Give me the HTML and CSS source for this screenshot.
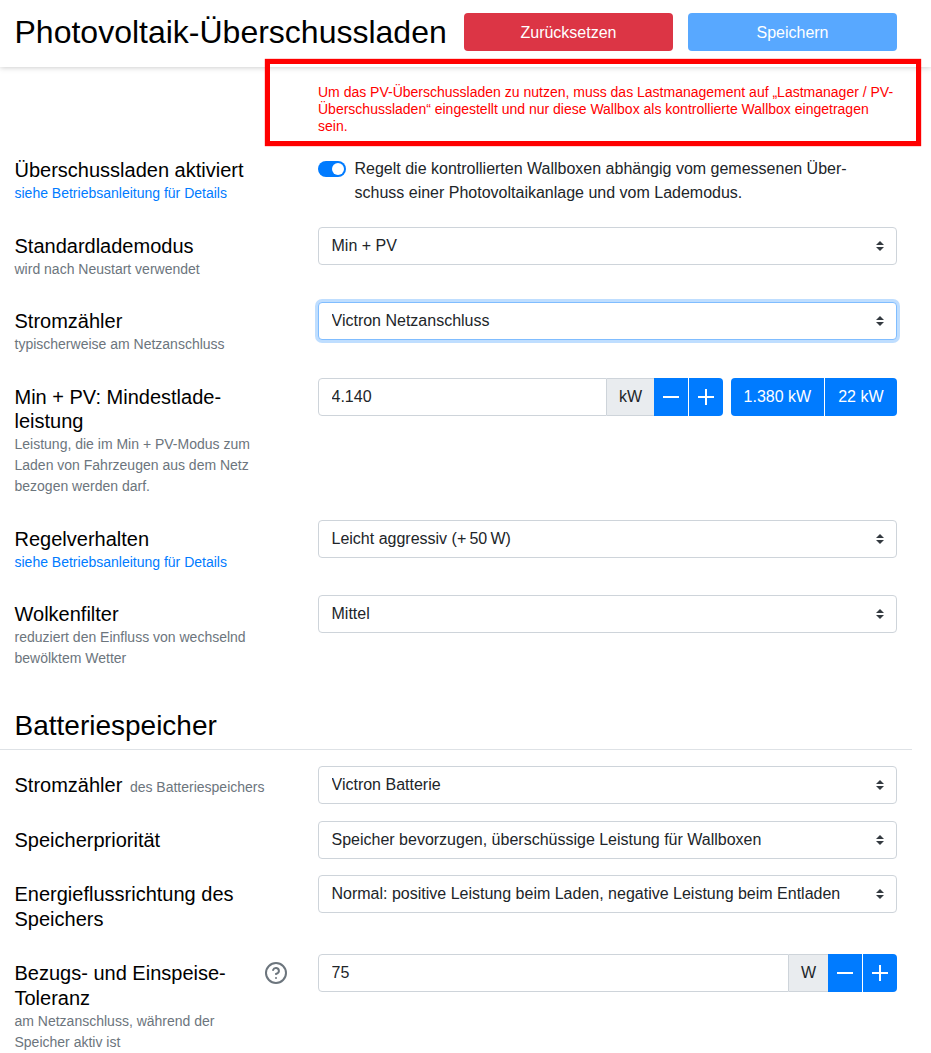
FILE: index.html
```html
<!DOCTYPE html>
<html lang="de">
<head>
    <meta charset="utf-8">
    <title>Photovoltaik-Überschussladen</title>
    <link rel="stylesheet" href="styles.css">
</head>
<body>
<div class="page">
    <header class="page-header">
        <h1 class="page-title">Photovoltaik-Überschussladen</h1>
        <div class="header-actions">
            <button class="btn btn-danger">Zurücksetzen</button>
            <button class="btn btn-primary btn-disabled">Speichern</button>
        </div>
    </header>

    <div class="notice-wrap">
        <p class="notice-text">Um das PV-Überschussladen zu nutzen, muss das Lastmanagement auf „Lastmanager / PV-Überschussladen“ eingestellt und nur diese Wallbox als kontrollierte Wallbox eingetragen sein.</p>
        <div class="notice-frame"></div>
    </div>

    <div class="form-row">
        <div class="form-label">
            <div class="label-title">Überschussladen aktiviert</div>
            <a class="label-link" href="#">siehe Betriebsanleitung für Details</a>
        </div>
        <div class="switch-field">
            <span class="switch"><span class="switch-knob"></span></span>
            <span class="switch-text">Regelt die kontrollierten Wallboxen abhängig vom gemessenen Über&shy;schuss einer Photovoltaikanlage und vom Lademodus.</span>
        </div>
    </div>

    <div class="form-row">
        <div class="form-label">
            <div class="label-title">Standardlademodus</div>
            <div class="label-sub">wird nach Neustart verwendet</div>
        </div>
        <select class="select"><option>Min + PV</option></select>
    </div>

    <div class="form-row">
        <div class="form-label">
            <div class="label-title">Stromzähler</div>
            <div class="label-sub">typischerweise am Netzanschluss</div>
        </div>
        <select class="select select-focus"><option>Victron Netzanschluss</option></select>
    </div>

    <div class="form-row">
        <div class="form-label">
            <div class="label-title">Min + PV: Mindestlade&shy;leistung</div>
            <div class="label-sub">Leistung, die im Min + PV-Modus zum Laden von Fahrzeugen aus dem Netz bezogen werden darf.</div>
        </div>
        <div class="input-line">
            <div class="input-group">
                <input class="input-value" value="4.140">
                <div class="input-unit">kW</div>
                <button class="step" aria-label="weniger"><svg width="16" height="16" viewBox="0 0 16 16"><path d="M0 8h16" stroke="#fff" stroke-width="2"/></svg></button>
                <button class="step step-last" aria-label="mehr"><svg width="16" height="16" viewBox="0 0 16 16"><path d="M0 8h16M8 0v16" stroke="#fff" stroke-width="2"/></svg></button>
            </div>
            <div class="preset-group">
                <button class="preset">1.380 kW</button>
                <button class="preset">22 kW</button>
            </div>
        </div>
    </div>

    <div class="form-row">
        <div class="form-label">
            <div class="label-title">Regelverhalten</div>
            <a class="label-link" href="#">siehe Betriebsanleitung für Details</a>
        </div>
        <select class="select"><option>Leicht aggressiv (+&#8239;50&#8239;W)</option></select>
    </div>

    <div class="form-row">
        <div class="form-label">
            <div class="label-title">Wolkenfilter</div>
            <div class="label-sub">reduziert den Einfluss von wechselnd bewölktem Wetter</div>
        </div>
        <select class="select"><option>Mittel</option></select>
    </div>

    <h2 class="section-title">Batteriespeicher</h2>

    <div class="form-row">
        <div class="form-label">
            <div class="label-title">Stromzähler <span class="label-inline">des Batteriespeichers</span></div>
        </div>
        <select class="select"><option>Victron Batterie</option></select>
    </div>

    <div class="form-row">
        <div class="form-label">
            <div class="label-title">Speicherpriorität</div>
        </div>
        <select class="select"><option>Speicher bevorzugen, überschüssige Leistung für Wallboxen</option></select>
    </div>

    <div class="form-row">
        <div class="form-label">
            <div class="label-title">Energieflussrichtung des Speichers</div>
        </div>
        <select class="select"><option>Normal: positive Leistung beim Laden, negative Leistung beim Entladen</option></select>
    </div>

    <div class="form-row">
        <div class="form-label">
            <div class="label-title">Bezugs- und Einspeise-Toleranz</div>
            <div class="label-sub">am Netzanschluss, während der Speicher aktiv ist</div>
            <svg class="help-icon" width="24" height="24" viewBox="0 0 24 24" fill="none" stroke="#6c757d" stroke-width="2" stroke-linecap="round" stroke-linejoin="round"><circle cx="12" cy="12" r="10"/><path d="M9.09 9a3 3 0 0 1 5.83 1c0 2-3 3-3 3"/><path d="M12 17h.01"/></svg>
        </div>
        <div class="input-group">
            <input class="input-value" value="75">
            <div class="input-unit">W</div>
            <button class="step" aria-label="weniger"><svg width="16" height="16" viewBox="0 0 16 16"><path d="M0 8h16" stroke="#fff" stroke-width="2"/></svg></button>
            <button class="step step-last" aria-label="mehr"><svg width="16" height="16" viewBox="0 0 16 16"><path d="M0 8h16M8 0v16" stroke="#fff" stroke-width="2"/></svg></button>
        </div>
    </div>
</div>
</body>
</html>
```

FILE: styles.css
```css
html, body {
    margin: 0;
    padding: 0;
    background: #fff;
    height: 1053px;
    overflow: hidden;
}
body {
    font-family: "Liberation Sans", Arial, sans-serif;
    font-size: 16px;
    line-height: 24px;
    color: #212529;
}
.page {
    width: 882.5px;
    padding: 0 15px 0 14.5px;
    position: relative;
}
.page-header {
    display: flex;
    align-items: center;
    justify-content: space-between;
    height: 67px;
    margin: 0 -34px 0 -14.5px;
    padding: 0 34px 3px 14.5px;
    box-shadow: 0 0 6px rgba(0, 0, 0, 0.25);
    box-sizing: border-box;
}
.page-title {
    margin: 0;
    font-size: 32px;
    font-weight: 400;
    line-height: 38px;
    color: #000;
}
.header-actions {
    display: grid;
    grid-template-columns: 209px 209px;
    gap: 15px;
}
.btn {
    height: 38px;
    padding: 2px 0 0;
    border: 1px solid transparent;
    border-radius: 4px;
    color: #fff;
    font: 16px/24px "Liberation Sans", Arial, sans-serif;
}
.btn-danger {
    background: #dc3545;
}
.btn-primary {
    background: #007bff;
}
.btn-disabled {
    opacity: 0.65;
}

.notice-wrap {
    padding: 17px 0 16.4px 303.5px;
    position: relative;
}
.notice-text {
    margin: 0;
    font-size: 14px;
    line-height: 17px;
    color: #f00;
}
.notice-frame {
    position: absolute;
    left: 250.5px;
    top: -8px;
    width: 656px;
    height: 87px;
    border: 5px solid #f00;
    box-shadow: 0 0 1px #f00;
    box-sizing: border-box;
}

.form-row {
    display: grid;
    grid-template-columns: 273.5px 579px;
    gap: 30px;
    align-items: start;
    margin-bottom: 16px;
}
.form-label {
    padding: 7px 18px 7px 0;
    position: relative;
}
.label-title {
    font-size: 20px;
    line-height: 24.5px;
    color: #000;
}
.label-sub, .label-link {
    display: block;
    margin: 0.5px 0 -0.5px;
    font-size: 14px;
    line-height: 21px;
    color: #6c757d;
}
.label-link {
    color: #007bff;
    text-decoration: none;
}
.label-inline {
    font-size: 14px;
    line-height: 1;
    color: #6c757d;
    margin-left: 2px;
}
.help-icon {
    position: absolute;
    right: 0;
    top: 7px;
}

.switch-field {
    display: flex;
    padding-top: 6px;
}
.switch {
    flex: none;
    width: 28px;
    height: 16px;
    margin: 4px 8.5px 0 0;
    border-radius: 8px;
    background: #007bff;
    position: relative;
}
.switch-knob {
    position: absolute;
    right: 2px;
    top: 2px;
    width: 12px;
    height: 12px;
    border-radius: 50%;
    background: #fff;
}
.switch-text {
    max-width: 510px;
}

.select {
    display: block;
    width: 100%;
    height: 38px;
    box-sizing: border-box;
    padding: 6px 28px 6px 12.5px;
    border: 1px solid #ced4da;
    border-radius: 4px;
    background: #fff url("data:image/svg+xml,%3Csvg xmlns='http://www.w3.org/2000/svg' width='8' height='10' viewBox='0 0 4 5'%3E%3Cpath fill='%23343a40' d='M2 0L0 2h4zm0 5L0 3h4z'/%3E%3C/svg%3E") no-repeat right 12px center;
    color: #212529;
    font: 16px/24px "Liberation Sans", Arial, sans-serif;
    appearance: none;
    outline: 0;
}
.select-focus {
    border-color: #80bdff;
    box-shadow: 0 0 0 3px rgba(0, 123, 255, 0.25);
}

.input-line {
    display: flex;
    gap: 8px;
}
.input-group {
    display: flex;
    flex: 1;
    height: 38px;
}
.input-value {
    flex: 1;
    min-width: 0;
    padding: 6px 12px 6px 12.5px;
    border: 1px solid #ced4da;
    border-radius: 4px 0 0 4px;
    box-sizing: border-box;
    color: #212529;
    font: 16px/24px "Liberation Sans", Arial, sans-serif;
    outline: 0;
}
.input-unit {
    padding: 6px 12px;
    border: 1px solid #ced4da;
    border-left: 0;
    border-right: 0;
    background: #e9ecef;
    box-sizing: border-box;
}
.step {
    width: 34px;
    padding: 0;
    border: 0;
    background: #007bff;
    display: flex;
    align-items: center;
    justify-content: center;
}
.step-last {
    width: 35px;
    border-left: 1px solid #fff;
    border-radius: 0 4px 4px 0;
}
.preset-group {
    display: flex;
}
.preset {
    height: 38px;
    border: 0;
    background: #007bff;
    color: #fff;
    font: 16px/24px "Liberation Sans", Arial, sans-serif;
}
.preset:first-child {
    padding: 0 12.5px;
    border-radius: 4px 0 0 4px;
}
.preset:last-child {
    padding: 0 13.5px;
    border-left: 1px solid #fff;
    border-radius: 0 4px 4px 0;
}

.section-title {
    margin: 33.5px -15px 16px -14.5px;
    padding: 0 15px 6px 14.5px;
    font-size: 28px;
    font-weight: 400;
    line-height: 34px;
    color: #000;
    border-bottom: 1px solid #dee2e6;
}
```
